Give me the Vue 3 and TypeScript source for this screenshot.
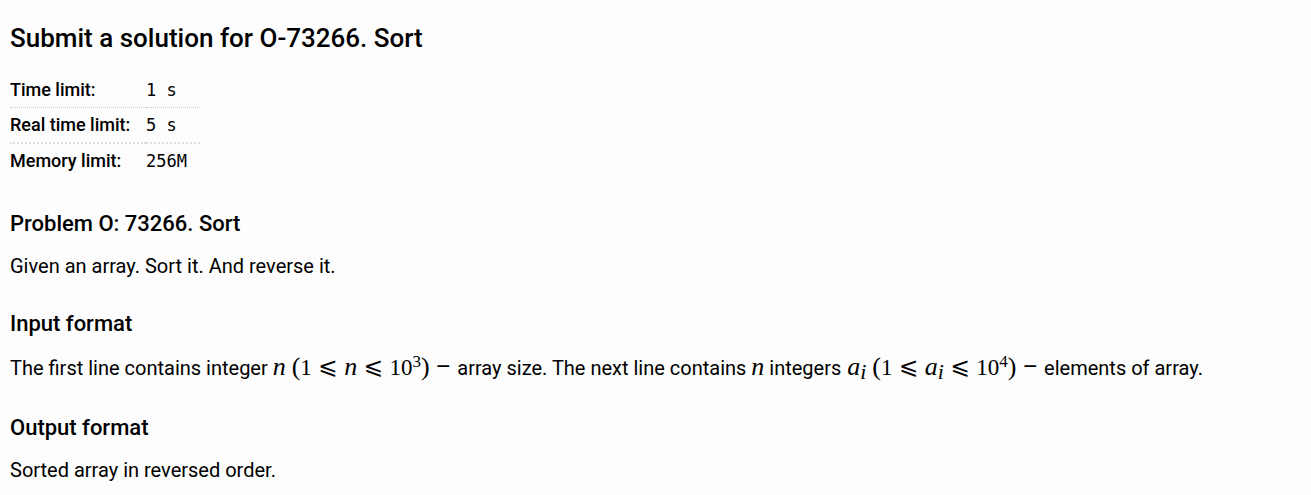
<script setup lang="ts">
interface Limit { label: string; value: string }
const limits: Limit[] = [
  { label: 'Time limit:', value: '1 s' },
  { label: 'Real time limit:', value: '5 s' },
  { label: 'Memory limit:', value: '256M' },
]
</script>

<template>
  <main class="page">
    <h1>Submit a solution for O-73266. Sort</h1>
    <table class="limits">
      <tbody>
        <tr v-for="limit in limits" :key="limit.label">
          <th scope="row">{{ limit.label }}</th>
          <td>{{ limit.value }}</td>
        </tr>
      </tbody>
    </table>
    <h2>Problem O: 73266. Sort</h2>
    <p>Given an array. Sort it. And reverse it.</p>
    <h2>Input format</h2>
    <p class="formulas">
      The first line contains integer <span class="math"><i>n</i></span>
      {{ ' ' }}<span class="math"><span class="paren">(</span>1<span class="rel">⩽</span><i>n</i><span class="rel">⩽</span>10<sup>3</sup><span class="paren">)</span></span>
      <span class="dash"> – </span>array size. The next line contains
      <span class="math"><i>n</i></span> integers <span class="math"><i>a</i><sub><i>i</i></sub></span>
      {{ ' ' }}<span class="math"><span class="paren">(</span>1<span class="rel">⩽</span><i>a</i><sub><i>i</i></sub><span class="rel">⩽</span>10<sup>4</sup><span class="paren">)</span></span>
      <span class="dash"> – </span>elements of array.
    </p>
    <h2>Output format</h2>
    <p>Sorted array in reversed order.</p>
  </main>
</template>

<style>
body { background: #fdfdfd; }
</style>

<style scoped>
.page { padding: 20px 10px 0; font-family: Roboto, sans-serif; font-size: 20px; font-weight: 400; line-height: 28px; color: #000; }
h1, h2, th { font-weight: 500; }
h1 { margin: 0 0 17px; font-size: 26px; line-height: 36px; }
h2 { margin: 28px 0 12px; font-size: 22px; line-height: 32px; }
p { margin: 0; }
.limits { margin-bottom: 30px; border-collapse: collapse; }
.limits th, .limits td { height: 34px; padding: 0; line-height: 24px; text-align: left; }
.limits th { width: 136px; font-size: 18px; }
.limits td { width: 54px; font-family: "DejaVu Sans Mono", monospace; font-size: 17px; }
.limits tr + tr { border-top: 1px dotted #ccc; }
.limits tr:last-child { border-top: 2px dotted #ddd; }
.formulas { line-height: 32px; }
.math { font-family: "Liberation Serif", serif; font-size: 23px; line-height: 1; white-space: nowrap; }
.math i { font-size: 26px; }
.math sup, .math sub { font-size: 17px; line-height: 0; }
.math sup { vertical-align: 8px; }
.math sub { vertical-align: -4px; }
.math sub i { font-size: 22px; }
.math + .math { margin-left: 1px; }
.paren { font-size: 26px; }
.math .rel { margin: 0 7px; font-family: "DejaVu Math TeX Gyre", "DejaVu Serif", serif; font-size: 23px; }
.dash { font-size: 24px; line-height: 1; }
</style>
